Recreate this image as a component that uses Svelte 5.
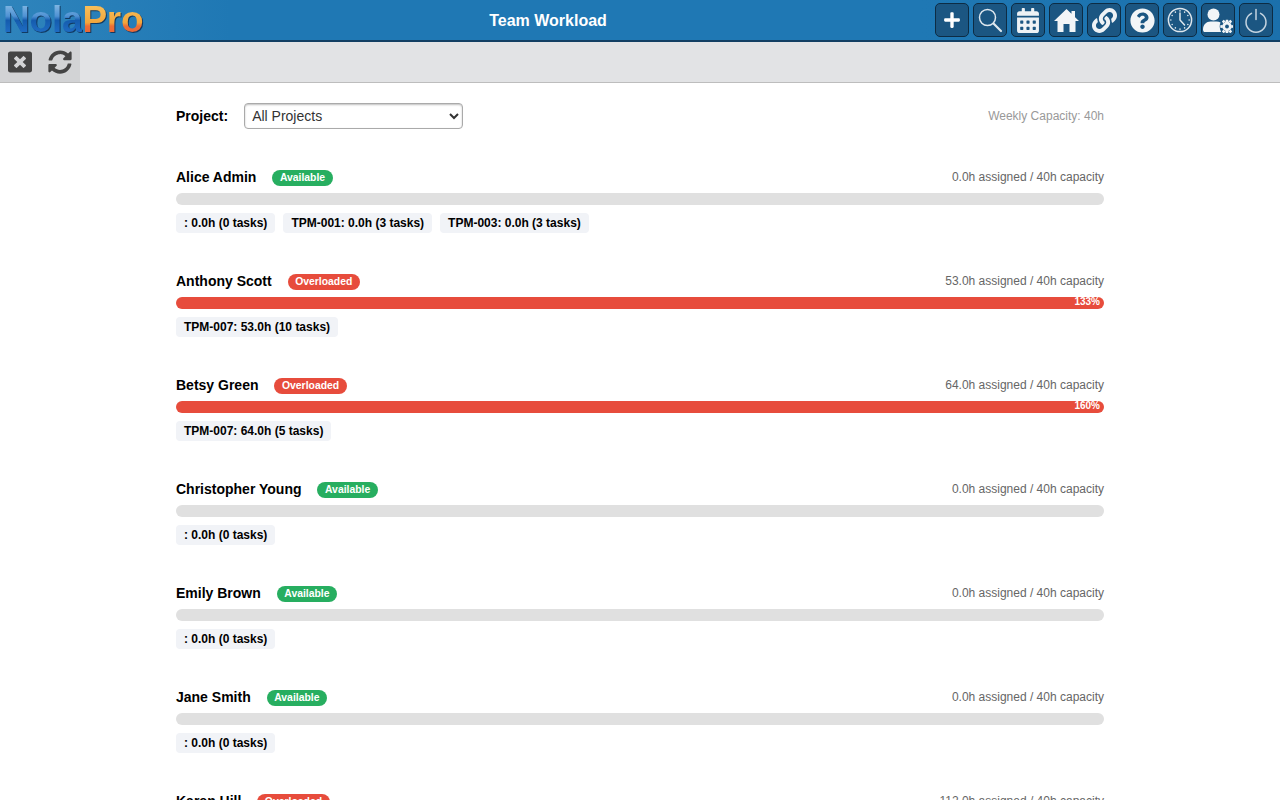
<script>
  const people = [
    { name: 'Alice Admin', status: 'Available', hours: '0.0', pct: 0, chips: [': 0.0h (0 tasks)', 'TPM-001: 0.0h (3 tasks)', 'TPM-003: 0.0h (3 tasks)'] },
    { name: 'Anthony Scott', status: 'Overloaded', hours: '53.0', pct: 133, chips: ['TPM-007: 53.0h (10 tasks)'] },
    { name: 'Betsy Green', status: 'Overloaded', hours: '64.0', pct: 160, chips: ['TPM-007: 64.0h (5 tasks)'] },
    { name: 'Christopher Young', status: 'Available', hours: '0.0', pct: 0, chips: [': 0.0h (0 tasks)'] },
    { name: 'Emily Brown', status: 'Available', hours: '0.0', pct: 0, chips: [': 0.0h (0 tasks)'] },
    { name: 'Jane Smith', status: 'Available', hours: '0.0', pct: 0, chips: [': 0.0h (0 tasks)'] },
    { name: 'Karen Hill', status: 'Overloaded', hours: '112.0', pct: 280, chips: ['TPM-007: 112.0h (8 tasks)'] }
  ];
</script>

<header class="topbar">
  <div class="logo"><span class="nola">Nola</span><span class="pro">Pro</span></div>
  <div class="title">Team Workload</div>
  <nav class="buttons">
    <button aria-label="Add">
      <svg width="16" height="18" viewBox="0 0 448 512"><path fill="#fff" d="M416 208H272V64c0-17.67-14.33-32-32-32h-32c-17.67 0-32 14.33-32 32v144H32c-17.67 0-32 14.33-32 32v32c0 17.67 14.33 32 32 32h144v144c0 17.67 14.33 32 32 32h32c17.67 0 32-14.33 32-32V304h144c17.67 0 32-14.33 32-32v-32c0-17.67-14.33-32-32-32z"/></svg>
    </button>
    <button aria-label="Search">
      <svg width="26" height="26" viewBox="0 0 26 26" fill="none" stroke="#dfe8ef"><circle cx="10.5" cy="10.5" r="8" stroke-width="1.5"/><path d="M16.5 16.5l7.5 7.5" stroke-width="2.2" stroke-linecap="round"/></svg>
    </button>
    <button aria-label="Calendar">
      <svg width="22" height="25" viewBox="0 0 448 512"><path fill="#eef2f5" d="M0 464c0 26.500 21.500 48 48 48h352c26.500 0 48-21.500 48-48V192H0v272zm320-196c0-6.600 5.400-12 12-12h40c6.600 0 12 5.400 12 12v40c0 6.600-5.400 12-12 12h-40c-6.600 0-12-5.400-12-12v-40zm0 128c0-6.600 5.400-12 12-12h40c6.600 0 12 5.400 12 12v40c0 6.600-5.400 12-12 12h-40c-6.600 0-12-5.400-12-12v-40zM192 268c0-6.600 5.400-12 12-12h40c6.600 0 12 5.400 12 12v40c0 6.600-5.400 12-12 12h-40c-6.600 0-12-5.400-12-12v-40zm0 128c0-6.600 5.400-12 12-12h40c6.600 0 12 5.400 12 12v40c0 6.600-5.400 12-12 12h-40c-6.600 0-12-5.400-12-12v-40zM64 268c0-6.600 5.400-12 12-12h40c6.600 0 12 5.400 12 12v40c0 6.600-5.400 12-12 12H76c-6.600 0-12-5.400-12-12v-40zm0 128c0-6.600 5.400-12 12-12h40c6.600 0 12 5.400 12 12v40c0 6.600-5.400 12-12 12H76c-6.600 0-12-5.400-12-12v-40zM400 64h-48V16c0-8.800-7.200-16-16-16h-32c-8.800 0-16 7.200-16 16v48H160V16c0-8.800-7.200-16-16-16h-32c-8.800 0-16 7.200-16 16v48H48C21.500 64 0 85.500 0 112v48h448v-48c0-26.500-21.500-48-48-48z"/></svg>
    </button>
    <button aria-label="Home">
      <svg width="25" height="23" viewBox="0 0 25 23"><path fill="#f2f5f7" d="M12.500 0L25 12h-3.500v11h-6v-8h-6v8h-6V12H0zM17.500 2h3.500v7l-3.500-3.300z"/></svg>
    </button>
    <button aria-label="Links">
      <svg width="25" height="25" viewBox="0 0 512 512"><path fill="#eef2f5" d="M326.612 185.391c59.747 59.809 58.927 155.698.36 214.590-.11.12-.24.25-.36.37l-67.200 67.200c-59.270 59.270-155.699 59.262-214.960 0-59.270-59.260-59.270-155.700 0-214.960l37.106-37.106c9.840-9.840 26.786-3.300 27.294 10.606.648 17.722 3.826 35.527 9.690 52.721 1.986 5.822.567 12.262-3.783 16.612l-13.087 13.087c-28.026 28.026-28.905 73.660-1.155 101.960 28.024 28.579 74.086 28.749 102.325.51l67.200-67.190c28.191-28.191 28.073-73.757 0-101.830-3.701-3.694-7.429-6.564-10.341-8.569a16.037 16.037 0 0 1-6.947-12.606c-.396-10.567 3.348-21.456 11.698-29.806l21.054-21.055c5.521-5.521 14.182-6.199 20.584-1.731a152.482 152.482 0 0 1 20.522 17.197zM467.547 44.449c-59.261-59.262-155.690-59.270-214.960 0l-67.200 67.200c-.12.12-.25.25-.36.37-58.566 58.892-59.387 154.781.36 214.590a152.454 152.454 0 0 0 20.521 17.196c6.402 4.468 15.064 3.789 20.584-1.731l21.054-21.055c8.350-8.350 12.094-19.239 11.698-29.806a16.037 16.037 0 0 0-6.947-12.606c-2.912-2.005-6.640-4.875-10.341-8.569-28.073-28.073-28.191-73.639 0-101.830l67.200-67.190c28.239-28.239 74.300-28.069 102.325.51 27.750 28.300 26.872 73.934-1.155 101.960l-13.087 13.087c-4.350 4.350-5.769 10.790-3.783 16.612 5.864 17.194 9.042 34.999 9.690 52.721.509 13.906 17.454 20.446 27.294 10.606l37.106-37.106c59.271-59.259 59.271-155.699.001-214.959z"/></svg>
    </button>
    <button aria-label="Help">
      <svg width="25" height="25" viewBox="0 0 512 512"><path fill="#f2f5f7" d="M504 256c0 136.997-111.043 248-248 248S8 392.997 8 256C8 119.083 119.043 8 256 8s248 111.083 248 248zM262.655 90c-54.497 0-89.255 22.957-116.549 63.758-3.536 5.286-2.353 12.415 2.715 16.258l34.699 26.310c5.205 3.947 12.621 3.008 16.665-2.122 17.864-22.658 30.113-35.797 57.303-35.797 20.429 0 45.698 13.148 45.698 32.958 0 14.976-12.363 22.667-32.534 33.976C247.128 238.528 216 254.941 216 296v4c0 6.627 5.373 12 12 12h56c6.627 0 12-5.373 12-12v-1.333c0-28.462 83.186-29.647 83.186-106.667 0-58.002-60.165-102-116.531-102zM256 338c-25.365 0-46 20.635-46 46 0 25.364 20.635 46 46 46s46-20.636 46-46c0-25.365-20.635-46-46-46z"/></svg>
    </button>
    <button aria-label="Time">
      <svg width="26" height="26" viewBox="0 0 26 26" fill="none" stroke="#dfe7ed"><circle cx="13" cy="13" r="11.600" stroke-width="1.500"/><path d="M13 6v7l4.500 5" stroke-width="1.500" stroke-linecap="round"/><g stroke-width="1.500" stroke-linecap="round"><path d="M13 3.800v.1M13 22.100v.1M3.800 13h.1M22.100 13h.1M8.400 5.100v.1M17.600 5.100v.1M5.100 8.400h.1M20.800 8.400h.1M5.100 17.600h.1M20.800 17.600h.1M8.400 20.800v.1M17.600 20.800v.1"/></g></svg>
    </button>
    <button aria-label="User settings">
      <svg width="30" height="25" viewBox="0 0 30 25"><circle cx="10.500" cy="6.500" r="6" fill="#f2f5f7"/><path fill="#f2f5f7" d="M1 24a3 3 0 0 1-1-2.500c0-5 3.500-8 7.500-8h6c1.500 0 2.800.4 4 1.100-1.300 2.900-1 6.400.6 9.400z"/><g fill="#f2f5f7"><circle cx="24" cy="18.500" r="4.700"/><path d="M22.800 11.800h2.400l.4 2.400h-3.200zM22.800 25.200h2.400l.4-2.400h-3.200zM17.300 17.300v2.400l2.400.4v-3.200zM30.700 17.300v2.400l-2.400.4v-3.200zM18.900 13.500l1.700-1.700 1.900 1.500-2.100 2.100zM29.100 13.500l-1.700-1.700-1.900 1.500 2.100 2.100zM18.900 23.500l1.700 1.700 1.900-1.500-2.100-2.100zM29.100 23.500l-1.700 1.700-1.900-1.500 2.100-2.100z"/></g><circle cx="24" cy="18.500" r="1.900" fill="#1b5682"/></svg>
    </button>
    <button aria-label="Log out">
      <svg width="26" height="26" viewBox="0 0 26 26" fill="none" stroke="#c5d4e0" stroke-width="1.500" stroke-linecap="round"><path d="M8.500 6.300a10 10 0 1 0 9 0"/><path d="M13 2.500v10"/></svg>
    </button>
  </nav>
</header>

<div class="toolbar">
  <div class="tools">
    <svg width="24" height="24" viewBox="0 0 512 512"><path fill="#444" d="M464 32H48C21.500 32 0 53.500 0 80v352c0 26.500 21.500 48 48 48h416c26.500 0 48-21.500 48-48V80c0-26.500-21.500-48-48-48zm-83.600 290.500c4.800 4.800 4.800 12.600 0 17.400l-40.500 40.500c-4.800 4.800-12.600 4.800-17.400 0L256 313.300l-66.500 67.100c-4.800 4.800-12.600 4.800-17.400 0l-40.500-40.500c-4.800-4.800-4.800-12.600 0-17.400l67.100-66.500-67.100-66.500c-4.800-4.800-4.800-12.600 0-17.400l40.500-40.500c4.800-4.800 12.600-4.800 17.400 0l66.500 67.100 66.500-67.100c4.800-4.800 12.600-4.800 17.400 0l40.500 40.500c4.800 4.800 4.800 12.600 0 17.400L313.300 256l67.100 66.500z"/></svg>
    <svg width="24" height="24" viewBox="0 0 512 512"><path fill="#444" d="M370.720 133.280C339.458 104.008 298.888 87.962 255.848 88c-77.458.068-144.328 53.178-162.791 126.850-1.344 5.363-6.122 9.150-11.651 9.150H24.103c-7.498 0-13.194-6.807-11.807-14.176C33.933 94.924 134.813 8 256 8c66.448 0 126.791 26.136 171.315 68.685L463.030 40.970C478.149 25.851 504 36.559 504 57.941V192c0 13.255-10.745 24-24 24H345.941c-21.382 0-32.090-25.851-16.971-40.971l41.750-41.749zM32 296h134.059c21.382 0 32.090 25.851 16.971 40.971l-41.750 41.750c31.262 29.273 71.835 45.319 114.876 45.280 77.418-.070 144.315-53.144 162.787-126.849 1.344-5.363 6.122-9.150 11.651-9.150h57.304c7.498 0 13.194 6.807 11.807 14.176C478.067 417.076 377.187 504 256 504c-66.448 0-126.791-26.136-171.315-68.685L48.970 471.030C33.851 486.149 8 475.441 8 454.059V320c0-13.255 10.745-24 24-24z"/></svg>
  </div>
</div>

<main class="page">
  <div class="filter">
    <div class="project">
      <label for="project">Project:</label>
      <select id="project"><option>All Projects</option></select>
    </div>
    <span class="weekly">Weekly Capacity: 40h</span>
  </div>

  {#each people as p}
    <section class="person">
      <div class="head">
        <div class="who">
          <span class="name">{p.name}</span>
          <span class="badge" class:over={p.status === 'Overloaded'}>{p.status}</span>
        </div>
        <span class="assigned">{p.hours}h assigned / 40h capacity</span>
      </div>
      <div class="track">
        {#if p.pct > 0}
          <div class="fill">{p.pct}%</div>
        {/if}
      </div>
      <div class="chips">
        {#each p.chips as c}
          <span class="chip">{c}</span>
        {/each}
      </div>
    </section>
  {/each}
</main>

<style>
  :global(body) {
    margin: 0;
    height: 800px;
    overflow: hidden;
    background: #fff;
    font-family: "Liberation Sans", Arial, sans-serif;
    color: #000;
  }

  .topbar {
    height: 40px;
    display: flex;
    align-items: center;
    background: linear-gradient(90deg, #2f84bc 0%, #1f78b4 18%, #1f78b4 72%, #1b70ac 100%);
    border-bottom: 2px solid #123f63;
  }

  .logo {
    width: 161px;
    flex: none;
    padding-left: 3px;
    box-sizing: border-box;
    font-size: 37px;
    font-weight: bold;
    letter-spacing: -0.2px;
    line-height: 40px;
  }

  .nola {
    background: linear-gradient(180deg, #7fb5e2 15%, #4f92d4 42%, #155cae 52%, #1f6cc2 80%);
    -webkit-background-clip: text;
    background-clip: text;
    color: transparent;
    filter: drop-shadow(1px 1px 0 rgba(10, 35, 70, 0.75));
  }

  .pro {
    background: linear-gradient(180deg, #f8c05c 15%, #f2a63c 58%, #ec6f36 66%, #e8663a 85%);
    -webkit-background-clip: text;
    background-clip: text;
    color: transparent;
    filter: drop-shadow(1px 1px 0 rgba(10, 35, 70, 0.75));
  }

  .title {
    flex: 1;
    padding-top: 1px;
    text-align: center;
    color: #fff;
    font-size: 16px;
    font-weight: bold;
  }

  .buttons {
    display: flex;
    gap: 4px;
    padding-right: 7px;
  }

  .buttons button {
    width: 34px;
    height: 34px;
    padding: 0;
    display: flex;
    align-items: center;
    justify-content: center;
    background: #1b5682;
    border: 1px solid #0d2c44;
    border-radius: 5px;
  }

  .toolbar {
    height: 40px;
    background: #e2e3e5;
    border-bottom: 1px solid #bdbdbd;
  }

  .tools {
    width: 80px;
    height: 40px;
    background: #d2d3d5;
    display: flex;
    align-items: center;
    gap: 16px;
    padding-left: 8px;
    box-sizing: border-box;
  }

  .page {
    width: 928px;
    margin: 0 auto;
    padding-top: 20px;
  }

  .filter {
    display: flex;
    justify-content: space-between;
    align-items: center;
    height: 26px;
    margin-bottom: 39px;
  }

  .project {
    display: flex;
    align-items: center;
    gap: 16px;
  }

  .project label {
    font-size: 14px;
    font-weight: bold;
  }

  .project select {
    width: 219px;
    height: 26px;
    padding: 0 3px;
    font-family: inherit;
    font-size: 14px;
    color: #333;
    background: #fff;
    border: 1px solid #aaa;
    border-radius: 4px;
    box-shadow: inset 0 1px 2px rgba(0, 0, 0, 0.25);
  }

  .weekly {
    font-size: 12px;
    color: #999;
  }

  .person {
    height: 104px;
  }

  .head {
    display: flex;
    justify-content: space-between;
    align-items: center;
    height: 18px;
    margin-bottom: 7px;
  }

  .who {
    display: flex;
    align-items: center;
    gap: 16px;
  }

  .name {
    font-size: 14px;
    font-weight: bold;
  }

  .badge {
    margin-top: 2px;
    padding: 2px 7.5px;
    font-size: 10.4px;
    font-weight: bold;
    line-height: 12px;
    color: #fff;
    background: #27ae60;
    border-radius: 10px;
  }

  .badge.over {
    background: #e74c3c;
  }

  .assigned {
    font-size: 12px;
    color: #666;
  }

  .track {
    height: 12px;
    background: #e0e0e0;
    border-radius: 6px;
    overflow: hidden;
  }

  .fill {
    height: 12px;
    padding-right: 4px;
    box-sizing: border-box;
    text-align: right;
    font-size: 10px;
    font-weight: bold;
    line-height: 10px;
    color: #fff;
    background: #e74c3c;
  }

  .chips {
    display: flex;
    gap: 8px;
    margin-top: 8px;
  }

  .chip {
    padding: 4px 8px;
    font-size: 12px;
    font-weight: bold;
    line-height: 12px;
    background: #f1f3f7;
    border-radius: 4px;
  }
</style>
